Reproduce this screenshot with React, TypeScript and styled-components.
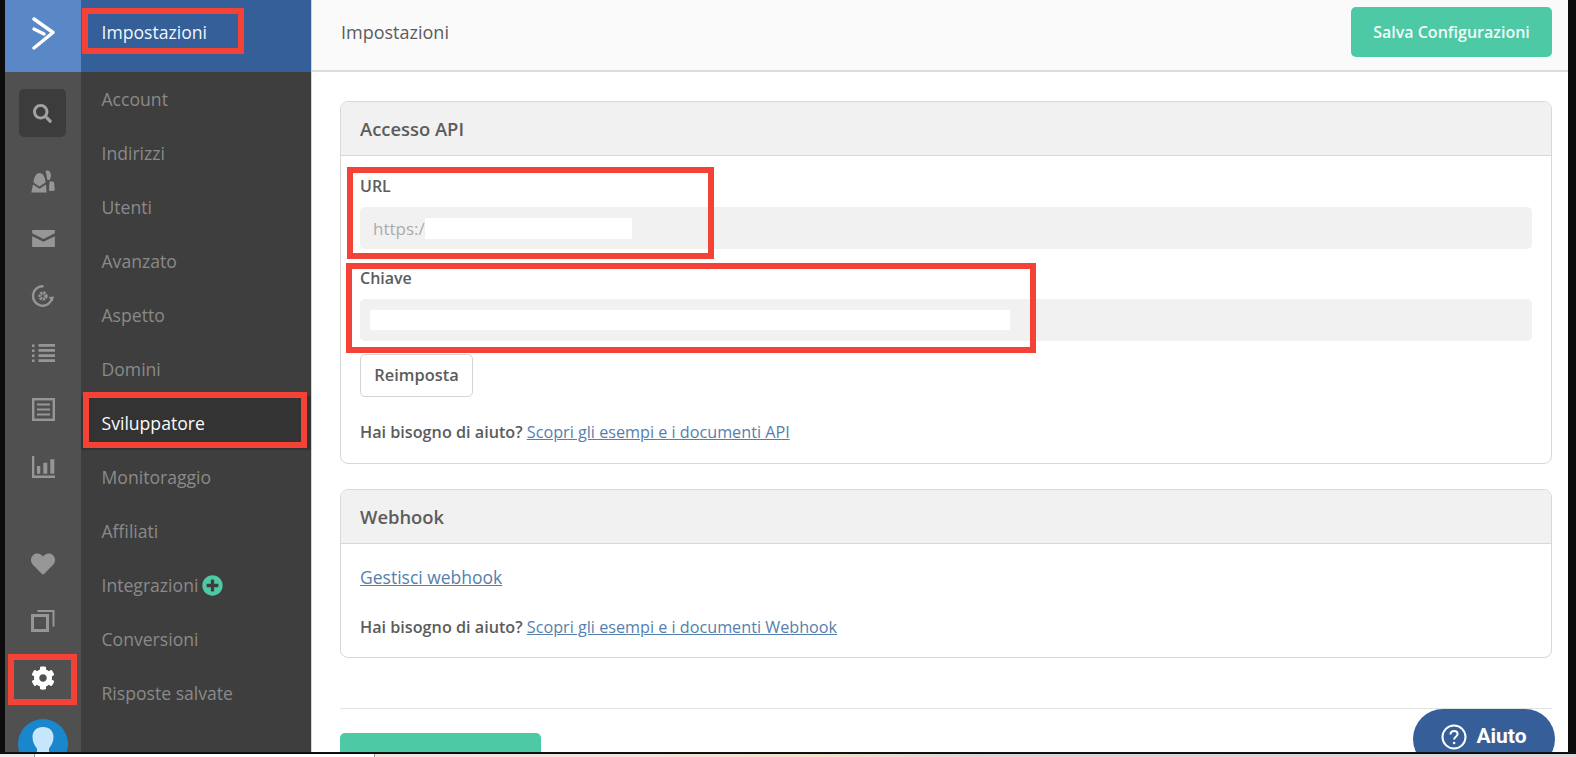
import React from 'react';
import styled, { createGlobalStyle } from 'styled-components';
import { FaSearch, FaHeart, FaCog, FaPlusCircle } from 'react-icons/fa';

const GlobalStyle = createGlobalStyle`
  html, body {
    margin: 0;
    padding: 0;
    background: #000;
    overflow: hidden;
  }
  * {
    box-sizing: border-box;
  }
`;

const Page = styled.div`
  position: relative;
  width: 1576px;
  height: 757px;
  overflow: hidden;
  display: flex;
  flex-direction: column;
  font-family: 'Open Sans', 'Liberation Sans', sans-serif;
  background: #0c0c0c;
`;

const Screen = styled.div`
  position: relative;
  height: 753px;
  flex: none;
  display: flex;
  padding: 0 8px 0 5px;
  overflow: hidden;
  border-bottom: 1px solid #111;
`;

const Rail = styled.div`
  width: 76px;
  flex: none;
  background: #505050;
  display: flex;
  flex-direction: column;
  align-items: center;
`;

const Logo = styled.div`
  height: 72px;
  width: 100%;
  flex: none;
  background: #5a88c6;
  display: flex;
  align-items: center;
  justify-content: center;
  padding-bottom: 6px;
  margin-bottom: 17px;
`;

const SearchBox = styled.div`
  width: 47px;
  height: 48px;
  flex: none;
  border-radius: 5px;
  background: #3c3c3c;
  color: #a2a2a2;
  display: flex;
  align-items: center;
  justify-content: center;
  font-size: 19px;
  margin-right: 1px;
  margin-bottom: 16px;
`;

const RailItem = styled.div<{ $active?: boolean; $gapTop?: number }>`
  height: 57px;
  width: 100%;
  flex: none;
  display: flex;
  align-items: center;
  justify-content: center;
  color: ${p => (p.$active ? '#fff' : '#969696')};
  margin-top: ${p => p.$gapTop ?? 0}px;
`;

const Avatar = styled.div`
  width: 50px;
  height: 50px;
  flex: none;
  margin-top: 13px;
  border-radius: 50%;
  background: #1a86cc;
  overflow: hidden;
  display: flex;
  justify-content: center;
`;

const Nav = styled.div`
  width: 231px;
  flex: none;
  background: #3e3e3e;
  display: flex;
  flex-direction: column;
  border-right: 1px solid #d4d4d4;
`;

const NavHeader = styled.div`
  height: 72px;
  flex: none;
  background: #345f98;
  color: #f2f6fb;
  display: flex;
  align-items: center;
  padding: 0 0 8px 20.5px;
  font-size: 17.6px;
  font-weight: 400;
`;

const NavItem = styled.div<{ $active?: boolean }>`
  height: 54px;
  flex: none;
  display: flex;
  align-items: center;
  gap: 4px;
  padding-left: 20.5px;
  font-size: 17.6px;
  color: ${p => (p.$active ? '#fbfbfb' : '#8a8a8a')};
  background: ${p => (p.$active ? '#333' : 'transparent')};
  font-weight: ${p => (p.$active ? 500 : 400)};
`;

const PlusIcon = styled.span`
  color: #4dc9a5;
  font-size: 21px;
  display: flex;
`;

const Main = styled.div`
  flex: 1;
  min-width: 0;
  background: #fff;
  display: flex;
  flex-direction: column;
`;

const TopBar = styled.div`
  height: 72px;
  flex: none;
  background: #fafafa;
  border-bottom: 2px solid #dcdcdc;
  display: flex;
  align-items: center;
  justify-content: space-between;
  padding: 0 16px 6px 29px;
  font-size: 18px;
  color: #5c5c5c;
`;

const PrimaryButton = styled.div`
  width: 201px;
  height: 50px;
  border-radius: 5px;
  background: #4dc9a5;
  color: #f2fbf8;
  font-size: 16px;
  font-weight: 600;
  display: flex;
  align-items: center;
  justify-content: center;
`;

const Content = styled.div`
  padding: 29px 16px 0 28px;
  display: flex;
  flex-direction: column;
`;

const Panel = styled.div<{ $height: number }>`
  height: ${p => p.$height}px;
  flex: none;
  border: 1px solid #d8d8d8;
  border-radius: 8px;
  overflow: hidden;
  margin-bottom: 25px;
`;

const PanelTitle = styled.div`
  height: 54px;
  background: #f1f1f1;
  border-bottom: 1px solid #d8d8d8;
  display: flex;
  align-items: center;
  padding-left: 19px;
  font-size: 18.4px;
  font-weight: 600;
  color: #5c5c5c;
`;

const PanelBody = styled.div`
  padding: 19px 19px 0;
  display: flex;
  flex-direction: column;
  align-items: flex-start;
`;

const Label = styled.div`
  height: 22px;
  line-height: 22px;
  font-size: 16px;
  font-weight: 600;
  color: #5c5c5c;
  margin-bottom: 10px;
`;

const Field = styled.div<{ $pad: number; $gapBottom: number }>`
  width: 100%;
  height: 42px;
  flex: none;
  border-radius: 5px;
  background: #f1f1f1;
  display: flex;
  align-items: center;
  padding-left: ${p => p.$pad}px;
  margin-bottom: ${p => p.$gapBottom}px;
  font-size: 17px;
  color: #ababab;
`;

const FieldValue = styled.span`
  width: 52px;
  flex: none;
  overflow: hidden;
  white-space: nowrap;
`;

const Redaction = styled.span<{ $width: number; $height: number }>`
  width: ${p => p.$width}px;
  height: ${p => p.$height}px;
  background: #fff;
  flex: none;
`;

const OutlineButton = styled.div`
  width: 113px;
  height: 43px;
  border: 1px solid #d4d4d4;
  border-radius: 5px;
  background: #fff;
  display: flex;
  align-items: center;
  justify-content: center;
  padding-bottom: 2px;
  font-size: 16.4px;
  font-weight: 600;
  color: #5c5c5c;
`;

const Help = styled.div<{ $top: number }>`
  margin-top: ${p => p.$top}px;
  font-size: 16.2px;
  line-height: 22px;
  font-weight: 600;
  color: #5c5c5c;
`;

const Link = styled.a<{ $large?: boolean }>`
  color: #5580ae;
  text-decoration: underline;
  font-weight: 400;
  font-size: ${p => (p.$large ? '17.5px' : 'inherit')};
`;

const Divider = styled.div`
  height: 1px;
  background: #e2e2e2;
  margin-top: 25px;
`;

const ApplyButton = styled.div`
  width: 201px;
  height: 50px;
  margin-top: 24px;
  border-radius: 5px;
  background: #4dc9a5;
  color: #f2fbf8;
  font-size: 16px;
  font-weight: 600;
  display: flex;
  align-items: center;
  justify-content: center;
`;

const HelpBubble = styled.div`
  position: absolute;
  left: 1413px;
  top: 709px;
  width: 142px;
  height: 60px;
  border-radius: 30px;
  background: #365f99;
  color: #fff;
  display: flex;
  align-items: flex-start;
  justify-content: center;
  gap: 9px;
  padding-top: 15px;
  font-family: Roboto, 'Liberation Sans', sans-serif;
  font-size: 21px;
  font-weight: 700;
  line-height: 25px;
`;

const RedBox = styled.div<{ $x: number; $y: number; $w: number; $h: number }>`
  position: absolute;
  left: ${p => p.$x}px;
  top: ${p => p.$y}px;
  width: ${p => p.$w}px;
  height: ${p => p.$h}px;
  border: 6px solid #f44336;
`;

const Taskbar = styled.div`
  height: 3px;
  flex: none;
  margin-top: 1px;
  display: flex;
  background: linear-gradient(90deg, #f4ece8 0%, #f0e3da 40%, #efe3c6 52%, #d8d8dc 62%, #d9d9dd 100%);
`;

const TaskbarStart = styled.div`
  width: 34px;
  background: #ececec;
`;

const TaskbarWindow = styled.div`
  width: 341px;
  background: #fff;
  border-left: 1px solid #999;
  border-right: 1px solid #999;
`;

const LogoIcon = () => (
  <svg width="23" height="33" viewBox="0 0 23 33" fill="none" stroke="#fff" strokeLinecap="round" strokeLinejoin="round">
    <path d="M2 2 L21 15.500 L2 31" strokeWidth="3.400" />
    <path d="M2 12 L12 17" strokeWidth="3.200" />
  </svg>
);

const PeopleIcon = () => (
  <svg width="24" height="23" viewBox="0 0 24 23" fill="currentColor">
    <path d="M14.500 1c2.800-1.400 5.200.6 5.400 3.800.1 2-.5 4-1.600 5.500l-2.200-.8c-.2-3-.9-5.900-1.600-8.500z" />
    <path d="M19 11l4 1 .8 8.300c-2 .8-4 .8-5.700.4-.1-3.300 0-6.700.9-9.700z" />
    <path d="M8.500 3c3.400 0 5.600 4 6.100 9.500L8.500 16.500 2.400 12.500C3 7 5.100 3 8.500 3z" />
    <path d="M2 14.500l6.500 4.300L15 14.500l.6 8H.3z" />
  </svg>
);

const MailIcon = () => (
  <svg width="23" height="17" viewBox="0 0 24 18" fill="currentColor">
    <path d="M0 0h24v3.500L12 9.500 0 3.500z" />
    <path d="M0 6.500l12 6 12-6V18H0z" />
  </svg>
);

const AutomationIcon = () => (
  <svg width="24" height="24" viewBox="0 0 24 24" fill="none" stroke="currentColor">
    <path d="M21 14.500A9.700 9.700 0 1 1 11.500 2.300" strokeWidth="2.400" strokeLinecap="round" />
    <circle cx="12" cy="12" r="3" strokeWidth="3.400" strokeDasharray="2 .8" />
    <path d="M17.500 13l5.500-.5-1.500 5z" fill="currentColor" stroke="none" />
  </svg>
);

const ListIcon = () => (
  <svg width="23" height="18" viewBox="0 0 23 18" fill="currentColor">
    <path d="M0 .5h2.500V3H0zM0 5.500h2.500V8H0zM0 10.500h2.500V13H0zM0 15.500h2.500V18H0z" />
    <path d="M6.500 0H23v2.700H6.500zM6.500 5H23v2.700H6.500zM6.500 10.200H23v2.700H6.500zM6.500 15.300H23V18H6.500z" />
  </svg>
);

const FormIcon = () => (
  <svg width="23" height="23" viewBox="0 0 23 23" fill="none" stroke="currentColor">
    <rect x="1.200" y="1.200" width="20.600" height="20.600" strokeWidth="2.400" />
    <path d="M5 6.500h13M5 11.500h13M5 16.500h13" strokeWidth="2" />
  </svg>
);

const ChartIcon = () => (
  <svg width="23" height="22" viewBox="0 0 23 22" fill="currentColor">
    <path d="M0 0h2.300v19.500H23V22H0z" />
    <path d="M5 10h3.300v7.700H5zM11.300 6.700h4v11h-4zM18.300 3.300h4v14.400h-4z" />
  </svg>
);

const CopyIcon = () => (
  <svg width="24" height="23" viewBox="0 0 24 23" fill="none" stroke="currentColor">
    <rect x="1.500" y="6.500" width="15" height="15" strokeWidth="3" />
    <path d="M6.500 2h16v15.500" strokeWidth="2" />
  </svg>
);

const AvatarIcon = () => (
  <svg width="26" height="50" viewBox="0 0 26 50" fill="#c6e6fb">
    <path d="M13 8c6.500 0 10.500 4 10.500 10 0 5-2.500 9-4.500 11.500V36l7 4v10H0V40l7-4v-6.500C5 27 2.500 23 2.500 18 2.500 12 6.500 8 13 8z" />
  </svg>
);

const QuestionIcon = () => (
  <svg width="26" height="26" viewBox="0 0 26 26" fill="none" stroke="#fff">
    <circle cx="13" cy="13" r="11.500" strokeWidth="2" />
    <path d="M9.500 10.500c0-2.200 1.600-3.500 3.600-3.500s3.500 1.300 3.500 3c0 2.800-3.500 2.800-3.500 5.500" strokeWidth="2" />
    <circle cx="13.100" cy="19" r="1.300" fill="#fff" stroke="none" />
  </svg>
);

const navItems = ['Account', 'Indirizzi', 'Utenti', 'Avanzato', 'Aspetto', 'Domini', 'Sviluppatore', 'Monitoraggio', 'Affiliati', 'Integrazioni', 'Conversioni', 'Risposte salvate'];

const App: React.FC = () => {
  return (
    <Page>
      <GlobalStyle />
      <Screen>
        <Rail>
          <Logo><LogoIcon /></Logo>
          <SearchBox><FaSearch /></SearchBox>
          <RailItem><PeopleIcon /></RailItem>
          <RailItem><MailIcon /></RailItem>
          <RailItem><AutomationIcon /></RailItem>
          <RailItem><ListIcon /></RailItem>
          <RailItem><FormIcon /></RailItem>
          <RailItem><ChartIcon /></RailItem>
          <RailItem $gapTop={40}><FaHeart size={24} /></RailItem>
          <RailItem><CopyIcon /></RailItem>
          <RailItem $active><FaCog size={24} /></RailItem>
          <Avatar><AvatarIcon /></Avatar>
        </Rail>
        <Nav>
          <NavHeader>Impostazioni</NavHeader>
          {navItems.map(item => (
            <NavItem key={item} $active={item === 'Sviluppatore'}>
              {item}
              {item === 'Integrazioni' && <PlusIcon><FaPlusCircle /></PlusIcon>}
            </NavItem>
          ))}
        </Nav>
        <Main>
          <TopBar>
            Impostazioni
            <PrimaryButton>Salva Configurazioni</PrimaryButton>
          </TopBar>
          <Content>
            <Panel $height={363}>
              <PanelTitle>Accesso API</PanelTitle>
              <PanelBody>
                <Label>URL</Label>
                <Field $pad={13} $gapBottom={18}>
                  <FieldValue>https://</FieldValue>
                  <Redaction $width={207} $height={21} />
                </Field>
                <Label>Chiave</Label>
                <Field $pad={10} $gapBottom={13}>
                  <Redaction $width={640} $height={20} />
                </Field>
                <OutlineButton>Reimposta</OutlineButton>
                <Help $top={24}>
                  Hai bisogno di aiuto? <Link>Scopri gli esempi e i documenti API</Link>
                </Help>
              </PanelBody>
            </Panel>
            <Panel $height={169}>
              <PanelTitle>Webhook</PanelTitle>
              <PanelBody>
                <Help $top={3}><Link $large>Gestisci webhook</Link></Help>
                <Help $top={27}>
                  Hai bisogno di aiuto? <Link>Scopri gli esempi e i documenti Webhook</Link>
                </Help>
              </PanelBody>
            </Panel>
            <Divider />
            <ApplyButton>Salva Configurazioni</ApplyButton>
          </Content>
        </Main>
        <HelpBubble><QuestionIcon />Aiuto</HelpBubble>
        <RedBox $x={82} $y={8} $w={162} $h={46} />
        <RedBox $x={83} $y={392} $w={224} $h={56} />
        <RedBox $x={8} $y={654} $w={69} $h={51} />
        <RedBox $x={347} $y={167} $w={367} $h={92} />
        <RedBox $x={346} $y={263} $w={690} $h={90} />
      </Screen>
      <Taskbar>
        <TaskbarStart />
        <TaskbarWindow />
      </Taskbar>
    </Page>
  );
};

export default App;
